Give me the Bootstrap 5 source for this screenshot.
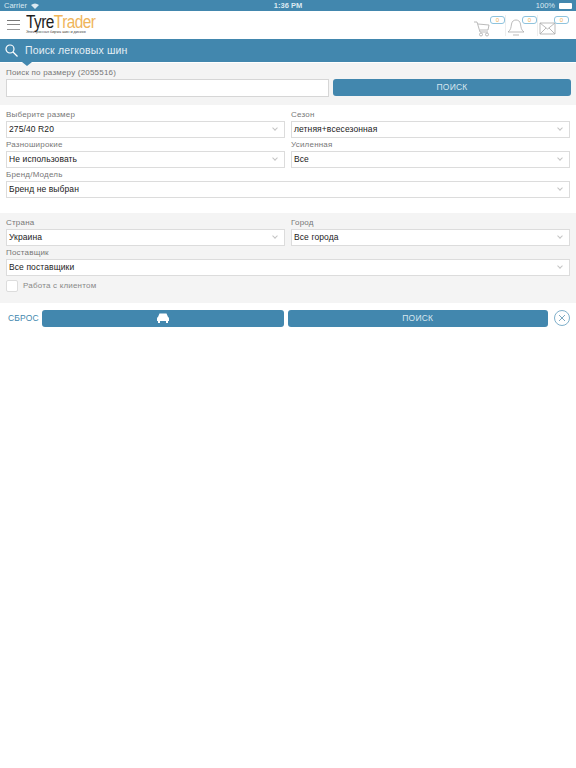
<!DOCTYPE html>
<html lang="ru">
  <head>
    <meta charset="UTF-8" />
    <meta name="viewport" content="width=device-width, initial-scale=1" />
    <title>TyreTrader</title>
    <link href="https://cdn.jsdelivr.net/npm/bootstrap@5.3.3/dist/css/bootstrap.min.css" rel="stylesheet" />
    <style>
      body { font-family: "Liberation Sans", Arial, sans-serif; background: #fff; color: #222; }
      .status-bar { height: 11px; background: #4287ae; color: #dce9f1; font-size: 7.5px; line-height: 11px; padding: 0 4px; position: relative; }
      .status-time { position: absolute; left: 0; right: 0; text-align: center; font-weight: 700; }
      .batt { width: 13px; height: 6px; background: #fff; border-radius: 1px; display: inline-block; }
      .top-head { height: 28px; padding: 0 7px; background: #fff; }
      .burger { width: 13px; height: 10px; border-top: 1px solid #777; border-bottom: 1px solid #999; position: relative; margin-right: 6px; }
      .burger::after { content: ""; position: absolute; left: 0; right: 0; top: 3px; height: 1px; background: #888; }
      .logo-wrap { line-height: 1; width: 66px; }
      .logo-main { font-family: "Liberation Sans", sans-serif; font-size: 17.5px; letter-spacing: -0.6px; transform: scaleX(.88); transform-origin: left; white-space: nowrap; display: block; height: 15px; line-height: 15px; color: #1d1d1d; }
      .logo-main span { color: #efb55a; }
      .logo-sub { font-size: 3.8px; color: #444; display: block; white-space: nowrap; margin-top: 1px; }
      .head-ico { width: 32px; height: 21px; position: relative; }
      .head-ico + .head-ico { margin-left: 0; border-left: 1px solid #eee; }
      .count-pill { position: absolute; top: 1px; right: 0; width: 15px; height: 8px; border: 1px solid #8ec3dd; border-radius: 3px; background: #fff; color: #efb55a; font-size: 6px; line-height: 6px; text-align: center; }
      .title-bar { height: 23px; background: #4287ae; color: #e3eef5; font-size: 10.5px; position: relative; padding-left: 25px; letter-spacing: .15px; }
      .title-bar svg { position: absolute; left: 5px; top: 5px; }
      .title-bar::after { content: ""; position: absolute; left: 22px; bottom: -4px; border-left: 5px solid transparent; border-right: 5px solid transparent; border-top: 4px solid #4287ae; }
      .strip-line { height: 1px; background: #fff; }
      .grey-sec { background: #f4f4f4; }
      .size-sec { padding: 5px 5px 5px 6px; height: 42px; }
      .white-sec { padding: 5px 6px 4px; height: 108px; }
      .place-sec { padding: 5px 6px 0; height: 90px; }
      .fld-label { font-size: 8px; line-height: 10px; color: #777; letter-spacing: .2px; margin-bottom: 1px; }
      .fld-box { height: 17px; background: #fff; border: 1px solid #dcdcdc; font-size: 8.5px; line-height: 15px; padding: 0 2px; color: #222; position: relative; letter-spacing: .1px; }
      .fld-box::after { content: ""; position: absolute; right: 7px; top: 4px; width: 4px; height: 4px; border-right: 1px solid #c4c4c4; border-bottom: 1px solid #c4c4c4; transform: rotate(45deg); }
      .size-input { height: 18px; flex: 0 0 323px; background: #fff; border: 1px solid #d6d6d6; }
      .two-col { display: grid; grid-template-columns: 279px 279px; column-gap: 6px; margin-bottom: 2px; }
      .blue-btn { background: #4287ae; color: #d6e6ef; border: 0; border-radius: 3px; font-size: 8.5px; height: 17px; padding: 0; letter-spacing: .2px; display: flex; align-items: center; justify-content: center; }
      .check-box { width: 12px; height: 12px; border: 1px solid #dcdcdc; border-radius: 2px; background: #fff; margin-right: 5px; }
      .check-text { font-size: 8px; color: #888; letter-spacing: .2px; }
      .foot-row { padding: 4px 6px 0 8px; height: 26px; }
      .reset-link { font-size: 8.5px; color: #4287ae; width: 34px; letter-spacing: .2px; }
      .close-round { width: 16px; height: 16px; border: 1px solid #7fb0cb; border-radius: 50%; margin-left: 6px; flex: none; }
    </style>
  </head>
  <body>
    <div class="status-bar d-flex justify-content-between align-items-center">
      <div class="status-time">1:36 PM</div>
      <div class="d-flex align-items-center gap-1">
        Carrier
        <svg width="8" height="6" viewBox="0 0 8 6"><path d="M0 2 Q4 -1 8 2 L4 6Z" fill="#dce9f1" /></svg>
      </div>
      <div class="d-flex align-items-center gap-1">100% <span class="batt"></span></div>
    </div>

    <div class="top-head d-flex align-items-center">
      <div class="burger"></div>
      <div class="logo-wrap">
        <span class="logo-main">Tyre<span>Trader</span></span>
        <span class="logo-sub">Электронная биржа шин и дисков</span>
      </div>
      <div class="ms-auto d-flex align-items-center">
        <div class="head-ico">
          <svg width="18" height="19" viewBox="0 0 18 19" fill="none" stroke="#aaa" stroke-width=".8"><path d="M1 4h3l3 10h8M5 6l11 1-1 5H7" /><circle cx="8" cy="16.5" r="1.5" /><circle cx="14" cy="16.5" r="1.5" /></svg>
          <div class="count-pill">0</div>
        </div>
        <div class="head-ico">
          <svg width="20" height="20" viewBox="0 0 20 20" fill="none" stroke="#aaa" stroke-width=".8"><path d="M2 15c3-2 3-5 3.500-8S8 3 10 3s4 1 4.500 4 .5 6 3.500 8Z" /><path d="M7 18h6" /></svg>
          <div class="count-pill">0</div>
        </div>
        <div class="head-ico">
          <svg width="20" height="20" viewBox="0 0 20 20" fill="none" stroke="#aaa" stroke-width=".8"><path d="M2 6h15v11H2ZM2 6l7.500 6L17 6M2 17l6-6M17 17l-6-6" /></svg>
          <div class="count-pill">0</div>
        </div>
      </div>
    </div>

    <div class="title-bar d-flex align-items-center">
      <svg width="13" height="13" viewBox="0 0 13 13" fill="none" stroke="#fff" stroke-width="1.200"><circle cx="5" cy="5" r="4" /><path d="M8 8l4.500 4.500" /></svg>
      Поиск легковых шин
    </div>
    <div class="strip-line"></div>

    <div class="grey-sec size-sec">
      <div class="fld-label">Поиск по размеру (2055516)</div>
      <div class="d-flex gap-1">
        <div class="size-input"></div>
        <button class="blue-btn flex-grow-1 ms-0">ПОИСК</button>
      </div>
    </div>

    <div class="white-sec">
      <div class="two-col">
        <div>
          <div class="fld-label">Выберите размер</div>
          <div class="fld-box">275/40 R20</div>
        </div>
        <div>
          <div class="fld-label">Сезон</div>
          <div class="fld-box">летняя+всесезонная</div>
        </div>
      </div>
      <div class="two-col">
        <div>
          <div class="fld-label">Разноширокие</div>
          <div class="fld-box">Не использовать</div>
        </div>
        <div>
          <div class="fld-label">Усиленная</div>
          <div class="fld-box">Все</div>
        </div>
      </div>
      <div class="fld-label">Бренд/Модель</div>
      <div class="fld-box">Бренд не выбран</div>
    </div>

    <div class="grey-sec place-sec">
      <div class="two-col">
        <div>
          <div class="fld-label">Страна</div>
          <div class="fld-box">Украина</div>
        </div>
        <div>
          <div class="fld-label">Город</div>
          <div class="fld-box">Все города</div>
        </div>
      </div>
      <div class="fld-label">Поставщик</div>
      <div class="fld-box">Все поставщики</div>
      <div class="d-flex align-items-center mt-1">
        <div class="check-box"></div>
        <span class="check-text">Работа с клиентом</span>
      </div>
    </div>

    <div class="foot-row d-flex align-items-center">
      <span class="reset-link">СБРОС</span>
      <div class="d-flex flex-grow-1 gap-1">
        <button class="blue-btn flex-fill">
          <svg width="12" height="10" viewBox="0 0 12 10" fill="#fff"><path d="M1 4l1.500-3.500h7L11 4c.7.300 1 .8 1 1.500V8h-1v2H9V8H3v2H1V8H0V5.500C0 4.800.3 4.300 1 4Z" /></svg>
        </button>
        <button class="blue-btn flex-fill">ПОИСК</button>
      </div>
      <div class="close-round d-flex align-items-center justify-content-center">
        <svg width="8" height="8" viewBox="0 0 8 8" stroke="#6d9fba" stroke-width=".9"><path d="M1 1l6 6M7 1l-6 6" /></svg>
      </div>
    </div>

    <script src="https://cdn.jsdelivr.net/npm/bootstrap@5.3.3/dist/js/bootstrap.bundle.min.js"></script>
  </body>
</html>
